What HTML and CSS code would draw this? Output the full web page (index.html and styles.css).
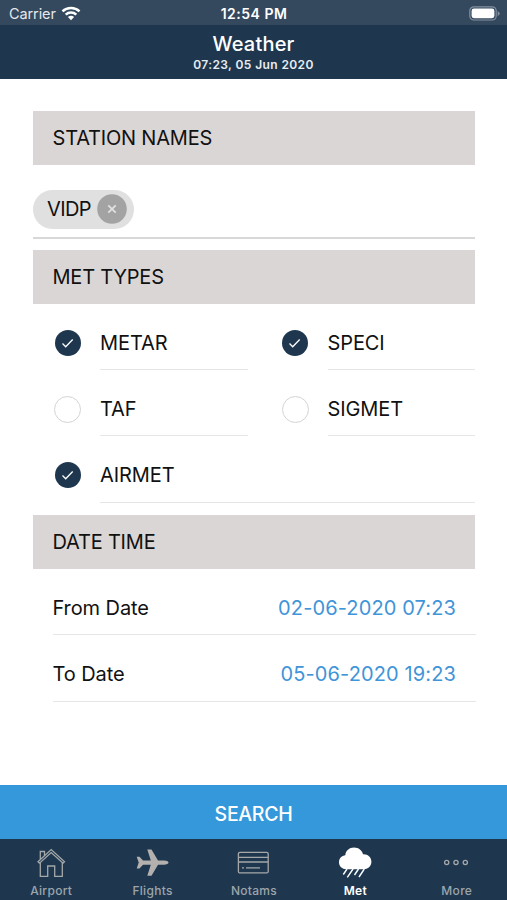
FILE: index.html
```html
<!DOCTYPE html>
<html lang="en">
<head>
<meta charset="utf-8">
<title>Weather</title>
<link rel="stylesheet" href="styles.css">
</head>
<body>
<div class="app">
  <div class="status">
    <div class="carrier"><span>Carrier</span>
      <svg class="wifi" width="20" height="15" viewBox="0 0 20 15"><g fill="none" stroke="#fff" stroke-width="2.5"><path d="M1.500 5.400C6.200 .9 13.800 .9 18.500 5.400"/><path d="M4.700 8.700C7.700 5.900 12.300 5.900 15.300 8.700"/></g><path d="M10 14.200L6.900 11C8.600 9.400 11.400 9.400 13.100 11Z" fill="#fff"/></svg>
    </div>
    <span class="clock">12:54 PM</span>
    <svg class="battery" width="32" height="15" viewBox="0 0 32 15"><rect x=".8" y=".8" width="26.400" height="13.200" rx="4" fill="none" stroke="#8391a0" stroke-width="1.200"/><rect x="2.600" y="2.600" width="22.800" height="9.600" rx="2.400" fill="#fff"/><path d="M28.700 5v5q2-1 2-2.500t-2-2.500z" fill="#8391a0"/></svg>
  </div>
  <header class="header">
    <h1>Weather</h1>
    <p>07:23, 05 Jun 2020</p>
  </header>
  <main class="content">
    <h2 class="section">STATION NAMES</h2>
    <div class="stations">
      <div class="chip"><span>VIDP</span>
        <svg width="30" height="30" viewBox="0 0 30 30"><circle cx="15" cy="15" r="14.800" fill="#a3a3a3"/><path d="M11.300 11.300l7.400 7.400M18.700 11.300l-7.400 7.400" stroke="#e2e2e2" stroke-width="1.700"/></svg>
      </div>
    </div>
    <h2 class="section">MET TYPES</h2>
    <div class="types">
      <div class="type"><i class="check on"><svg viewBox="0 0 26 26"><path d="M7.500 13.500l3.200 3.200 7-7.200"/></svg></i><span class="label">METAR</span></div>
      <div class="type"><i class="check on"><svg viewBox="0 0 26 26"><path d="M7.500 13.500l3.200 3.200 7-7.200"/></svg></i><span class="label">SPECI</span></div>
      <div class="type"><i class="check"></i><span class="label">TAF</span></div>
      <div class="type"><i class="check"></i><span class="label">SIGMET</span></div>
      <div class="type wide"><i class="check on"><svg viewBox="0 0 26 26"><path d="M7.500 13.500l3.200 3.200 7-7.200"/></svg></i><span class="label">AIRMET</span></div>
    </div>
    <h2 class="section">DATE TIME</h2>
    <div class="dates">
      <div class="date"><span class="name">From Date</span><span class="value">02-06-2020 07:23</span></div>
      <div class="date"><span class="name">To Date</span><span class="value">05-06-2020 19:23</span></div>
    </div>
  </main>
  <button class="search">SEARCH</button>
  <nav class="tabs">
    <a class="tab"><svg width="34" height="34" viewBox="0 0 34 34"><g fill="none" stroke="#a5a8a9" stroke-width="1.300"><path d="M4 16.700L17.200 4.600 30.500 16.700 29 18.200 17.200 7.600 5.500 18.200Z"/><path d="M6.300 14.500V6.500H10.500V10.700M6.300 17.600V31.300H13.700V21H20.700V31.300H28.300V17.600"/></g></svg><span>Airport</span></a>
    <a class="tab"><svg width="34" height="34" viewBox="0 0 34 34"><path d="M33.500 17.600C33.500 16.300 31.500 15.500 29 15.500H23L16.500 4.500H12.300L15.800 15.500H8L4.500 11.700H1.700L3.700 17.600 1.700 23.500H4.500L8 19.700H15.800L12.300 30.700H16.500L23 19.700H29C31.500 19.700 33.500 18.900 33.500 17.600Z" fill="#b3b0ae"/></svg><span>Flights</span></a>
    <a class="tab"><svg width="34" height="34" viewBox="0 0 34 34"><g fill="none" stroke="#a5a8a9" stroke-width="1.300"><rect x="2.400" y="7.300" width="29.800" height="20.600" rx="1.500"/><path d="M2.400 12.300H32.200M2.400 17H32.200M6 22.800H8M10 22.800H24"/></g></svg><span>Notams</span></a>
    <a class="tab active"><svg width="34" height="34" viewBox="0 0 34 34"><path d="M8.500 24.200C4 24.200 1 21.300 1 17.300S4 10.600 7.300 10.300C7.700 5.600 11.300 2.500 16 2.500S24 5.300 25 9.300C30 9 33.400 12.300 33.400 16.700S30 24.200 25.500 24.200Z" fill="#fff"/><path d="M9 24L5.300 29.500M15 24L9.300 32.300M20.500 24L16.500 30M26.300 24L21 32" stroke="#fff" stroke-width="1.400"/></svg><span>Met</span></a>
    <a class="tab"><svg width="34" height="34" viewBox="0 0 34 34"><g fill="none" stroke="#a5a8a9" stroke-width="1.300"><circle cx="7.700" cy="17.500" r="2.100"/><circle cx="17" cy="17.500" r="2.100"/><circle cx="26.300" cy="17.500" r="2.100"/></g></svg><span>More</span></a>
  </nav>
</div>
</body>
</html>
```
FILE: styles.css
```css
* { box-sizing: border-box; }
body { margin: 0; font-family: Inter, "Liberation Sans", sans-serif; color: #111; background: #fff; }
h1, h2, p { margin: 0; }
.app { width: 507px; height: 900px; display: flex; flex-direction: column; overflow: hidden; }
.status { flex: none; height: 25px; background: #34495e; color: #fff; display: grid; grid-template-columns: 1fr auto 1fr; align-items: center; padding: 2px 6px 0 9px; }
.carrier { display: flex; align-items: center; gap: 5px; font-size: 14.500px; letter-spacing: -.1px; color: #e4e8ec; }
.clock { font-size: 14px; font-weight: 600; letter-spacing: .5px; margin-left: -2px; }
.battery { justify-self: end; }
.header { flex: none; height: 54px; background: #1e374f; color: #fff; text-align: center; padding-top: 7px; }
.header h1 { font-size: 20px; line-height: 24px; font-weight: 500; letter-spacing: .2px; }
.header p { font-size: 12px; line-height: 18px; font-weight: 600; letter-spacing: .4px; color: #e8edf2; }
.content { flex: 1; padding: 32px 32px 0 33px; font-size: 20px; }
.section { height: 54px; background: #dad6d5; padding-left: 19.500px; font-size: 20px; line-height: 54px; font-weight: 400; letter-spacing: -.2px; }
.stations { height: 73.500px; border-bottom: 2px solid #d8d8d8; padding-top: 24.500px; margin-bottom: 11px; }
.chip { width: 101px; height: 39px; border-radius: 20px; background: #e0e0e0; display: flex; align-items: center; justify-content: space-between; padding: 0 7px 0 14px; letter-spacing: -.6px; }
.types { display: grid; grid-template-columns: 1fr 1fr; column-gap: 13px; height: 211.500px; grid-auto-rows: 66.400px; }
.type { display: flex; align-items: stretch; padding-left: 21px; }
.wide { grid-column: span 2; }
.check { flex: none; width: 27px; height: 27px; border-radius: 50%; border: 1.500px solid #d4d4d4; margin: 26px 19px 0 0; }
.check.on { width: 26px; height: 26px; margin: 26px 19.500px 0 .5px; background: #1e374f; border: 0; }
.check svg { display: block; width: 26px; height: 26px; fill: none; stroke: #fff; stroke-width: 1.300; }
.label { flex: 1; border-bottom: 1px solid #e6e6e6; line-height: 79px; letter-spacing: -.1px; }
.dates { padding-left: 19.500px; }
.date { height: 66.330px; display: flex; justify-content: space-between; padding-right: 20px; margin-right: -1px; border-bottom: 1px solid #e6e6e6; line-height: 79px; }
.name { letter-spacing: -.1px; }
.value { color: #3f95d8; letter-spacing: .12px; }
.search { flex: none; height: 54px; border: 0; background: #3498db; color: #fff; font: 500 19.500px/54px Inter, sans-serif; letter-spacing: -.3px; padding: 2px 0 0; }
.tabs { flex: none; height: 61px; background: #1e374f; display: grid; grid-template-columns: repeat(5, 1fr); }
.tab { display: flex; flex-direction: column; align-items: center; padding-top: 6px; color: #9da5ac; font-size: 12px; font-weight: 500; letter-spacing: .3px; line-height: 20px; }
.tab svg { flex: none; margin-bottom: 2px; }
.tab span { padding-left: 1px; }
.tab.active { color: #fff; font-weight: 600; }
```
